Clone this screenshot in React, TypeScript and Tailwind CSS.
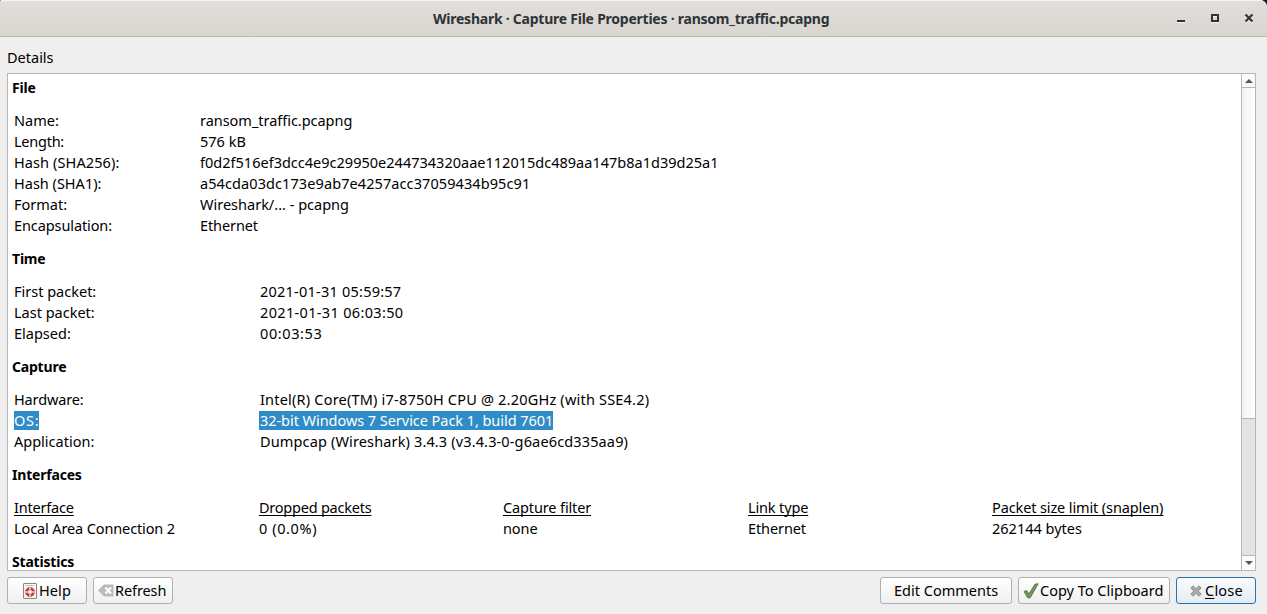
import type { ReactNode } from "react";

type Row = { label: string; value: string; labelCls?: string; valueCls?: string; selected?: boolean };

const fileRows: Row[] = [
  { label: "Name:", value: "ransom_traffic.pcapng", valueCls: "tracking-[-0.03px]" },
  { label: "Length:", value: "576 kB", labelCls: "tracking-[-0.25px]" },
  {
    label: "Hash (SHA256):",
    value: "f0d2f516ef3dcc4e9c29950e244734320aae112015dc489aa147b8a1d39d25a1",
    labelCls: "tracking-[0.1px]",
    valueCls: "tracking-[0.01px]",
  },
  {
    label: "Hash (SHA1):",
    value: "a54cda03dc173e9ab7e4257acc37059434b95c91",
    valueCls: "tracking-[0.09px]",
  },
  { label: "Format:", value: "Wireshark/... - pcapng" },
  { label: "Encapsulation:", value: "Ethernet", labelCls: "tracking-[-0.1px]", valueCls: "tracking-[-0.1px]" },
];

const timeRows: Row[] = [
  { label: "First packet:", value: "2021-01-31 05:59:57", valueCls: "tracking-[0.23px]" },
  { label: "Last packet:", value: "2021-01-31 06:03:50", valueCls: "tracking-[0.34px]" },
  { label: "Elapsed:", value: "00:03:53", valueCls: "tracking-[0.6px]" },
];

const captureRows: Row[] = [
  {
    label: "Hardware:",
    value: "Intel(R) Core(TM) i7-8750H CPU @ 2.20GHz (with SSE4.2)",
    labelCls: "tracking-[-0.15px]",
    valueCls: "tracking-[0.2px]",
  },
  {
    label: "OS:",
    value: "32-bit Windows 7 Service Pack 1, build 7601",
    labelCls: "tracking-[0.7px]",
    valueCls: "-ml-px w-[294px] pl-px tracking-[-0.05px]",
    selected: true,
  },
  {
    label: "Application:",
    value: "Dumpcap (Wireshark) 3.4.3 (v3.4.3-0-g6ae6cd335aa9)",
    valueCls: "tracking-[0.14px]",
  },
];

type Column = { title: string; value: string; width: string; titleCls: string; valueCls: string };

const interfaceColumns: Column[] = [
  { title: "Interface", value: "Local Area Connection 2", width: "w-[245px]", titleCls: "tracking-[-0.2px]", valueCls: "tracking-[-0.12px]" },
  { title: "Dropped packets", value: "0 (0.0%)", width: "w-[244px]", titleCls: "tracking-[-0.23px]", valueCls: "tracking-[0.6px]" },
  { title: "Capture filter", value: "none", width: "w-[245px]", titleCls: "tracking-[-0.13px]", valueCls: "tracking-[-0.1px]" },
  { title: "Link type", value: "Ethernet", width: "w-[244px]", titleCls: "tracking-[-0.15px]", valueCls: "tracking-[-0.1px]" },
  { title: "Packet size limit (snaplen)", value: "262144 bytes", width: "w-[240px]", titleCls: "tracking-[-0.12px]", valueCls: "" },
];

function Heading({ children }: { children: ReactNode }) {
  return <h2 className="h-[21px] pl-1 text-[14px] font-bold tracking-[-0.2px]">{children}</h2>;
}

function Rows({ rows, labelWidth }: { rows: Row[]; labelWidth: string }) {
  return (
    <div className="my-3 pl-1.5">
      {rows.map((r) => {
        const mark = r.selected ? "mt-px block h-[19px] bg-[#308cc6] leading-[19px] text-white" : "block";
        return (
          <div key={r.label} className="flex h-[21px]">
            <div className={`flex shrink-0 ${labelWidth}`}>
              <span className={`${mark} ${r.labelCls ?? ""}`}>{r.label}</span>
            </div>
            <span className={`${mark} ${r.valueCls ?? ""}`}>{r.value}</span>
          </div>
        );
      })}
    </div>
  );
}

function Button({ children, className }: { children: ReactNode; className: string }) {
  return (
    <button className={`flex h-[27px] items-center rounded-[3px] border bg-linear-to-b ${className}`}>
      {children}
    </button>
  );
}

const plain = "border-[#b0b0b0] from-white to-[#f0f0f0]";

function HelpIcon() {
  return (
    <svg className="mr-[2px] shrink-0" width="14" height="16" viewBox="0 0 14 16" fill="none">
      <rect x="0.5" y="0.5" width="13" height="15" rx="0.5" fill="#f6f6f5" stroke="#868884" />
      <path d="M2.5 2.5h8" stroke="#c4c6c2" />
      <circle cx="7" cy="9" r="3.5" stroke="#dc2a2a" strokeWidth="2" />
      <path d="M7 4v2.5M7 11.5V14M2 9h2.5M9.500 9H12" stroke="#fff" strokeWidth="1.400" />
      <circle cx="7" cy="9" r="4.700" stroke="#a53434" strokeWidth="0.500" />
      <circle cx="7" cy="9" r="2.200" stroke="#a53434" strokeWidth="0.500" />
    </svg>
  );
}

function ClearIcon() {
  return (
    <svg className="mr-px shrink-0" width="16" height="13" viewBox="0 0 16 13" fill="none">
      <path d="M0 6.500L6 .5h9.500v12H6z" fill="#babdb6" />
      <path d="M7.500 3.500l5.500 6M13 3.500l-5.500 6" stroke="#fff" strokeWidth="2.200" />
    </svg>
  );
}

function CheckIcon() {
  return (
    <svg className="mr-px shrink-0" width="16" height="16" viewBox="0 0 16 16">
      <path
        d="M1 8.500L3.600 7.500 5.900 10.800 12.200 1 15.200.8 7.300 14.700 4.900 15z"
        fill="#73975f"
        stroke="#4a6b3c"
        strokeWidth="0.800"
        strokeLinejoin="round"
      />
    </svg>
  );
}

function CrossIcon() {
  return (
    <svg className="mr-[3px] shrink-0" width="12" height="12" viewBox="0 0 12 12">
      <path
        d="M3 .8L6 3.700 9 .8 11.200 3 8.200 6l3 3L9 11.200 6 8.300 3 11.200.8 9l3-3-3-3z"
        fill="#a9aba5"
        stroke="#7f817c"
        strokeWidth="0.800"
      />
    </svg>
  );
}

export default function App() {
  return (
    <div className="h-[614px] w-[1267px] overflow-hidden bg-[#0c1c26]">
      <div className="flex h-full flex-col overflow-hidden rounded-tl-[2px] rounded-tr-[7px] bg-[#efefef] font-['Noto_Sans',sans-serif] text-[14.5px] leading-[21px] whitespace-nowrap text-black">
        <header className="flex h-[37px] shrink-0 items-center border-t border-b border-t-[#f6f5f3] border-b-[#bfb8b1] bg-linear-to-b from-[#e1dedb] to-[#d9d6d1] pr-[13px] pb-px pl-[433px]">
          <h1 className="flex-1 text-[14px] font-bold tracking-[-0.24px] text-[#2e3436]">
            Wireshark · Capture File Properties · ransom_traffic.pcapng
          </h1>
          <svg width="78" height="12" viewBox="0 0 78 12" fill="none" strokeWidth="2">
            <g stroke="#f5f4f2">
              <path d="M1 10h8" />
              <path d="M36 4h6v6h-6z" />
              <path d="M69.500 3.500l7 7M76.500 3.500l-7 7" />
            </g>
            <g stroke="#2e3436">
              <path d="M1 9h8" />
              <path d="M36 3h6v6h-6z" />
              <path d="M69.500 2.500l7 7M76.500 2.500l-7 7" strokeWidth="2.200" />
            </g>
          </svg>
        </header>
        <div className="mt-[10px] h-[26px] shrink-0 pl-[7px]">Details</div>
        <main className="mr-[11px] ml-[7px] flex h-[498px] shrink-0 border border-[#b6b6b6] bg-white">
          <section className="h-full flex-1 overflow-hidden pt-[3px]">
            <Heading>File</Heading>
            <Rows rows={fileRows} labelWidth="w-[186px]" />
            <Heading>Time</Heading>
            <Rows rows={timeRows} labelWidth="w-[246px]" />
            <Heading>Capture</Heading>
            <Rows rows={captureRows} labelWidth="w-[246px]" />
            <Heading>Interfaces</Heading>
            <div className="my-3 flex pl-1.5">
              {interfaceColumns.map((c) => (
                <div key={c.title} className={`shrink-0 ${c.width}`}>
                  <div className={`h-[21px] underline decoration-1 underline-offset-2 [text-decoration-skip-ink:none] ${c.titleCls}`}>
                    {c.title}
                  </div>
                  <div className={`h-[21px] ${c.valueCls}`}>{c.value}</div>
                </div>
              ))}
            </div>
            <Heading>Statistics</Heading>
          </section>
          <div className="flex w-[14px] flex-col border-l border-[#b6b6b6] bg-[#e3e3e3]">
            <div className="flex h-[14px] items-center justify-center border-b border-[#b6b6b6] bg-[#fafafa]">
              <svg width="8" height="4" viewBox="0 0 8 4" fill="#555">
                <path d="M4 0l4 4H0z" />
              </svg>
            </div>
            <div className="h-[331px] border-b border-[#b6b6b6] bg-linear-to-r from-[#f2f2f2] to-white" />
            <div className="flex-1" />
            <div className="flex h-[15px] items-center justify-center border-t border-[#b6b6b6] bg-[#fafafa]">
              <svg width="8" height="4" viewBox="0 0 8 4" fill="#555">
                <path d="M0 0h8L4 4z" />
              </svg>
            </div>
          </div>
        </main>
        <footer className="mt-[6px] flex pr-[11px] pl-[7px]">
          <Button className={`w-20 pl-[15px] ${plain}`}>
            <HelpIcon />
            <span className="tracking-[0.1px]">Help</span>
          </Button>
          <Button className={`ml-1.5 w-20 pl-[4px] ${plain}`}>
            <ClearIcon />
            <span className="tracking-[-0.1px]">Refresh</span>
          </Button>
          <Button className={`ml-auto w-[132px] pl-[13px] ${plain}`}>Edit Comments</Button>
          <Button className={`ml-1.5 w-[152px] pl-[4px] ${plain}`}>
            <CheckIcon />
            Copy To Clipboard
          </Button>
          <Button className="ml-1.5 w-20 border-[#2573a8] from-[#fafcfd] to-[#e3ebf2] pl-[13px]">
            <CrossIcon />
            <span className="tracking-[0.2px]">
              <span className="underline decoration-1 underline-offset-2">C</span>lose
            </span>
          </Button>
        </footer>
      </div>
    </div>
  );
}
